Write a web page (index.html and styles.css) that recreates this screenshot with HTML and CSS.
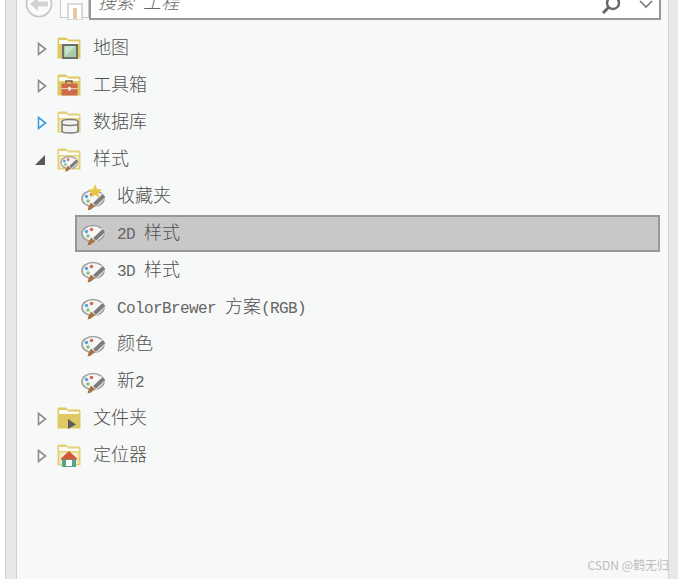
FILE: index.html
```html
<!DOCTYPE html>
<html lang="zh-CN">
<head>
	<meta charset="UTF-8">
	<link rel="stylesheet" href="styles.css">
	<title>目录</title>
</head>
<body>
	<svg class="defs" width="0" height="0" aria-hidden="true">
		<symbol id="i-folder" viewBox="0 0 24 22">
			<path d="M0.5 21.5V2Q0.5 0.5 2 0.5H9L11 2.5H22Q23.5 2.5 23.5 4V21.5Z" fill="#dfc962"/>
			<path d="M2 3H10L11 4.5H22V7H2Z" fill="#fdfcf4"/>
		</symbol>
		<symbol id="i-folder-pale" viewBox="0 0 24 22">
			<path d="M0.5 21.5V2Q0.5 0.5 2 0.5H9L11 2.5H22Q23.5 2.5 23.5 4V21.5Z" fill="#e3d07a"/>
			<path d="M2 3H10L11 4.5H22V7H2Z" fill="#fdfcf4"/>
			<path d="M2.5 8.5H21.5V20H2.5Z" fill="#f4ecc4"/>
		</symbol>
		<symbol id="i-palette" viewBox="0 0 26 24">
			<ellipse cx="12" cy="11.5" rx="11" ry="8" fill="#f6f6f6" stroke="#a0a0a0" stroke-width="1.7"/>
			<circle cx="5.5" cy="9.5" r="1.8" fill="#5aa5dc"/>
			<circle cx="10.5" cy="7.5" r="1.8" fill="#d9694f"/>
			<circle cx="7" cy="14" r="1.8" fill="#86bf7f"/>
			<path d="M13 18L23 8" stroke="#f6f6f6" stroke-width="6"/>
			<path d="M13.5 17.5L23 8.5" stroke="#7c7c7c" stroke-width="4"/>
			<path d="M10 15.5L14 19L10 22.5L6.5 23.5L7.5 20Z" fill="#a8733f"/>
		</symbol>
	</svg>

	<div class="shell">
		<div class="rail"></div>
		<main class="panel">
			<header class="toolbar">
				<button class="back" aria-label="后退">
					<svg width="28" height="28" viewBox="0 0 28 28"><circle cx="14" cy="14" r="12.5" fill="#fbfbfb" stroke="#c4c4c4" stroke-width="1.6"/><path d="M5 14L13 7V11.5H23V16.5H13V21Z" fill="#d2d2d2"/></svg>
				</button>
				<button class="home" aria-label="主页">
					<svg width="20" height="20" viewBox="0 0 20 20"><path d="M3 4H17V20H3Z" fill="#fff" stroke="#cfcfcf" stroke-width="1.6"/><path d="M8 8H12V19H8Z" fill="#e5c9a6"/></svg>
				</button>
				<div class="search">
					<span class="search-text">搜索<span class="latin"> </span>工程</span>
					<svg class="search-icon" width="20" height="20" viewBox="0 0 20 20"><circle cx="12" cy="3" r="6" fill="none" stroke="#666" stroke-width="2.4"/><path d="M7.5 7.5L2 13" stroke="#666" stroke-width="3"/></svg>
					<svg class="search-caret" width="14" height="10" viewBox="0 0 14 10"><path d="M1 1L7 7L13 1" fill="none" stroke="#777" stroke-width="1.6"/></svg>
				</div>
			</header>

			<ul class="tree">
				<li class="row row-top">
					<svg class="arrow" width="10" height="14" viewBox="0 0 10 14"><path d="M1.5 1.5L8.5 7L1.5 12.5Z" fill="#fff" stroke="#8c8c8c" stroke-width="1.6"/></svg>
					<svg class="icon" width="24" height="24" viewBox="0 0 24 24">
						<use href="#i-folder" width="24" height="22"/>
						<path d="M6 8H20V21H6Z" fill="#a6cfa6" stroke="#6e6e6e" stroke-width="2"/>
						<path d="M8 19L18 10V9H8Z" fill="#c9e2cc"/>
					</svg>
					<span class="label">地图</span>
				</li>
				<li class="row row-top">
					<svg class="arrow" width="10" height="14" viewBox="0 0 10 14"><path d="M1.5 1.5L8.5 7L1.5 12.5Z" fill="#fff" stroke="#8c8c8c" stroke-width="1.6"/></svg>
					<svg class="icon" width="24" height="24" viewBox="0 0 24 24">
						<use href="#i-folder" width="24" height="22"/>
						<path d="M9 9.5V7H15V9.5" fill="none" stroke="#7d5a48" stroke-width="1.4"/>
						<path d="M4.5 9.5H20.5V21.5H4.5Z" fill="#cd6a4b"/>
						<path d="M4.5 14H20.5V15.2H4.5Z" fill="#ecc8ba"/>
						<path d="M11 13H14V16.5H11Z" fill="#f3ded6"/>
					</svg>
					<span class="label">工具箱</span>
				</li>
				<li class="row row-top">
					<svg class="arrow" width="10" height="14" viewBox="0 0 10 14"><path d="M1.5 1.5L8.5 7L1.5 12.5Z" fill="#fff" stroke="#3d9bdc" stroke-width="1.6"/></svg>
					<svg class="icon" width="24" height="24" viewBox="0 0 24 24">
						<use href="#i-folder-pale" width="24" height="22"/>
						<path d="M5 10.5Q5 8.5 13 8.5Q21 8.5 21 10.5V20Q21 22 13 22Q5 22 5 20Z" fill="#f2f2f2" stroke="#7c7c7c" stroke-width="1.6"/>
						<path d="M5 13.5Q13 15.5 21 13.5" fill="none" stroke="#7c7c7c" stroke-width="1.4"/>
					</svg>
					<span class="label">数据库</span>
				</li>
				<li class="row row-top">
					<svg class="arrow arrow-open" width="12" height="12" viewBox="0 0 12 12"><path d="M11 1V11H1Z" fill="#595959"/></svg>
					<svg class="icon" width="24" height="24" viewBox="0 0 24 24">
						<use href="#i-folder-pale" width="24" height="22"/>
						<use href="#i-palette" x="2" y="6" width="22" height="18"/>
					</svg>
					<span class="label">样式</span>
				</li>
				<li class="row row-child">
					<svg class="icon" width="26" height="26" viewBox="0 0 26 26">
						<use href="#i-palette" y="3" width="26" height="24"/>
						<path d="M14 0L16 5L21 5.5L17.2 8.8L18.4 13.5L14 11L9.6 13.5L10.8 8.8L7 5.5L12 5Z" fill="#e6c845"/>
					</svg>
					<span class="label">收藏夹</span>
				</li>
				<li class="row row-child row-selected">
					<svg class="icon" width="26" height="24" viewBox="0 0 26 24"><use href="#i-palette"/></svg>
					<span class="label"><span class="latin">2D </span>样式</span>
				</li>
				<li class="row row-child">
					<svg class="icon" width="26" height="24" viewBox="0 0 26 24"><use href="#i-palette"/></svg>
					<span class="label"><span class="latin">3D </span>样式</span>
				</li>
				<li class="row row-child">
					<svg class="icon" width="26" height="24" viewBox="0 0 26 24"><use href="#i-palette"/></svg>
					<span class="label"><span class="latin">ColorBrewer </span>方案<span class="latin">(RGB)</span></span>
				</li>
				<li class="row row-child">
					<svg class="icon" width="26" height="24" viewBox="0 0 26 24"><use href="#i-palette"/></svg>
					<span class="label">颜色</span>
				</li>
				<li class="row row-child">
					<svg class="icon" width="26" height="24" viewBox="0 0 26 24"><use href="#i-palette"/></svg>
					<span class="label">新<span class="latin">2</span></span>
				</li>
				<li class="row row-top">
					<svg class="arrow" width="10" height="14" viewBox="0 0 10 14"><path d="M1.5 1.5L8.5 7L1.5 12.5Z" fill="#fff" stroke="#8c8c8c" stroke-width="1.6"/></svg>
					<svg class="icon" width="24" height="24" viewBox="0 0 24 24">
						<use href="#i-folder" width="24" height="22"/>
						<path d="M11 12L19 17.5L11 22Z" fill="#5e5e5e"/>
					</svg>
					<span class="label">文件夹</span>
				</li>
				<li class="row row-top">
					<svg class="arrow" width="10" height="14" viewBox="0 0 10 14"><path d="M1.5 1.5L8.5 7L1.5 12.5Z" fill="#fff" stroke="#8c8c8c" stroke-width="1.6"/></svg>
					<svg class="icon" width="24" height="24" viewBox="0 0 24 24">
						<use href="#i-folder-pale" width="24" height="22"/>
						<path d="M5 15H19V23H5Z" fill="#55a58d"/>
						<path d="M9 16H15V22H9Z" fill="#fff"/>
						<path d="M12 7L21 15.5H3Z" fill="#d0583f"/>
					</svg>
					<span class="label">定位器</span>
				</li>
			</ul>
		</main>
		<div class="rail rail-right"></div>
	</div>
	<div class="watermark">CSDN @鹤无归</div>
</body>
</html>
```

FILE: styles.css
```css
* {
	box-sizing: border-box;
}

body {
	margin: 0;
	height: 579px;
	overflow: hidden;
	background: #fff;
	color: #505050;
	font-family: "Noto Sans CJK SC", "Liberation Sans", sans-serif;
}

ul {
	margin: 0;
	padding: 0;
	list-style: none;
}

button {
	padding: 0;
	border: none;
	background: none;
}

.defs {
	position: absolute;
}

.shell {
	display: flex;
	height: 100%;
	padding-left: 5px;
}

.rail {
	flex: 0 0 12px;
	background: #e8e8e8;
	border-left: 1px solid #d2d2d2;
	border-right: 1px solid #d2d2d2;
}
.rail-right {
	flex: 0 0 10px;
	border-right: none;
}

.panel {
	flex: 1;
	min-width: 0;
	background: #f7f9f8;
}

.toolbar {
	display: flex;
	align-items: flex-end;
	height: 20px;
	overflow: hidden;
}

.back {
	flex: none;
	display: block;
	height: 28px;
	margin: 0 7px 4px 8px;
	transform: translateY(2px);
}
.back svg {
	display: block;
}

.home {
	flex: none;
	display: flex;
	justify-content: center;
	width: 29px;
	height: 30px;
	margin-bottom: 2px;
	padding-top: 11px;
	background: #fbfbfb;
	border: 1px solid #c8c8c8;
}

.search {
	flex: none;
	display: flex;
	align-items: center;
	width: 572px;
	height: 38px;
	padding-left: 7px;
	background: #fff;
	border: 2px solid #989898;
}

.search-text {
	font-size: 18px;
	font-weight: 300;
	font-style: italic;
	color: #666;
}

.search-icon {
	margin-left: auto;
	margin-top: 18px;
}

.search-caret {
	margin: 8px 6px 0 18px;
}

.tree {
	padding-top: 10px;
}

.row {
	display: flex;
	align-items: center;
	height: 37px;
	font-size: 18px;
	font-weight: 300;
	white-space: nowrap;
}

.row-top {
	padding-left: 20px;
}
.row-top .icon {
	margin-left: 10px;
	margin-right: 12px;
}

.row-child {
	margin: 0 8px 0 58px;
	padding-left: 4px;
	border: 2px solid transparent;
}
.row-child .icon {
	margin-right: 10px;
}

.row-selected {
	background: #c8c8c8;
	border-color: #989898;
}

.label {
	margin-bottom: 5px;
}

.arrow {
	flex: none;
}
.arrow-open {
	width: 12px;
	margin-left: -3px;
	margin-right: 1px;
}

.icon {
	flex: none;
}

.latin {
	font-family: "Liberation Mono", monospace;
	font-size: 16px;
	letter-spacing: -0.6px;
	color: #666;
	white-space: pre;
}

.watermark {
	position: absolute;
	right: 9px;
	top: 556px;
	font-size: 12px;
	color: #bdbdbd;
}
```
